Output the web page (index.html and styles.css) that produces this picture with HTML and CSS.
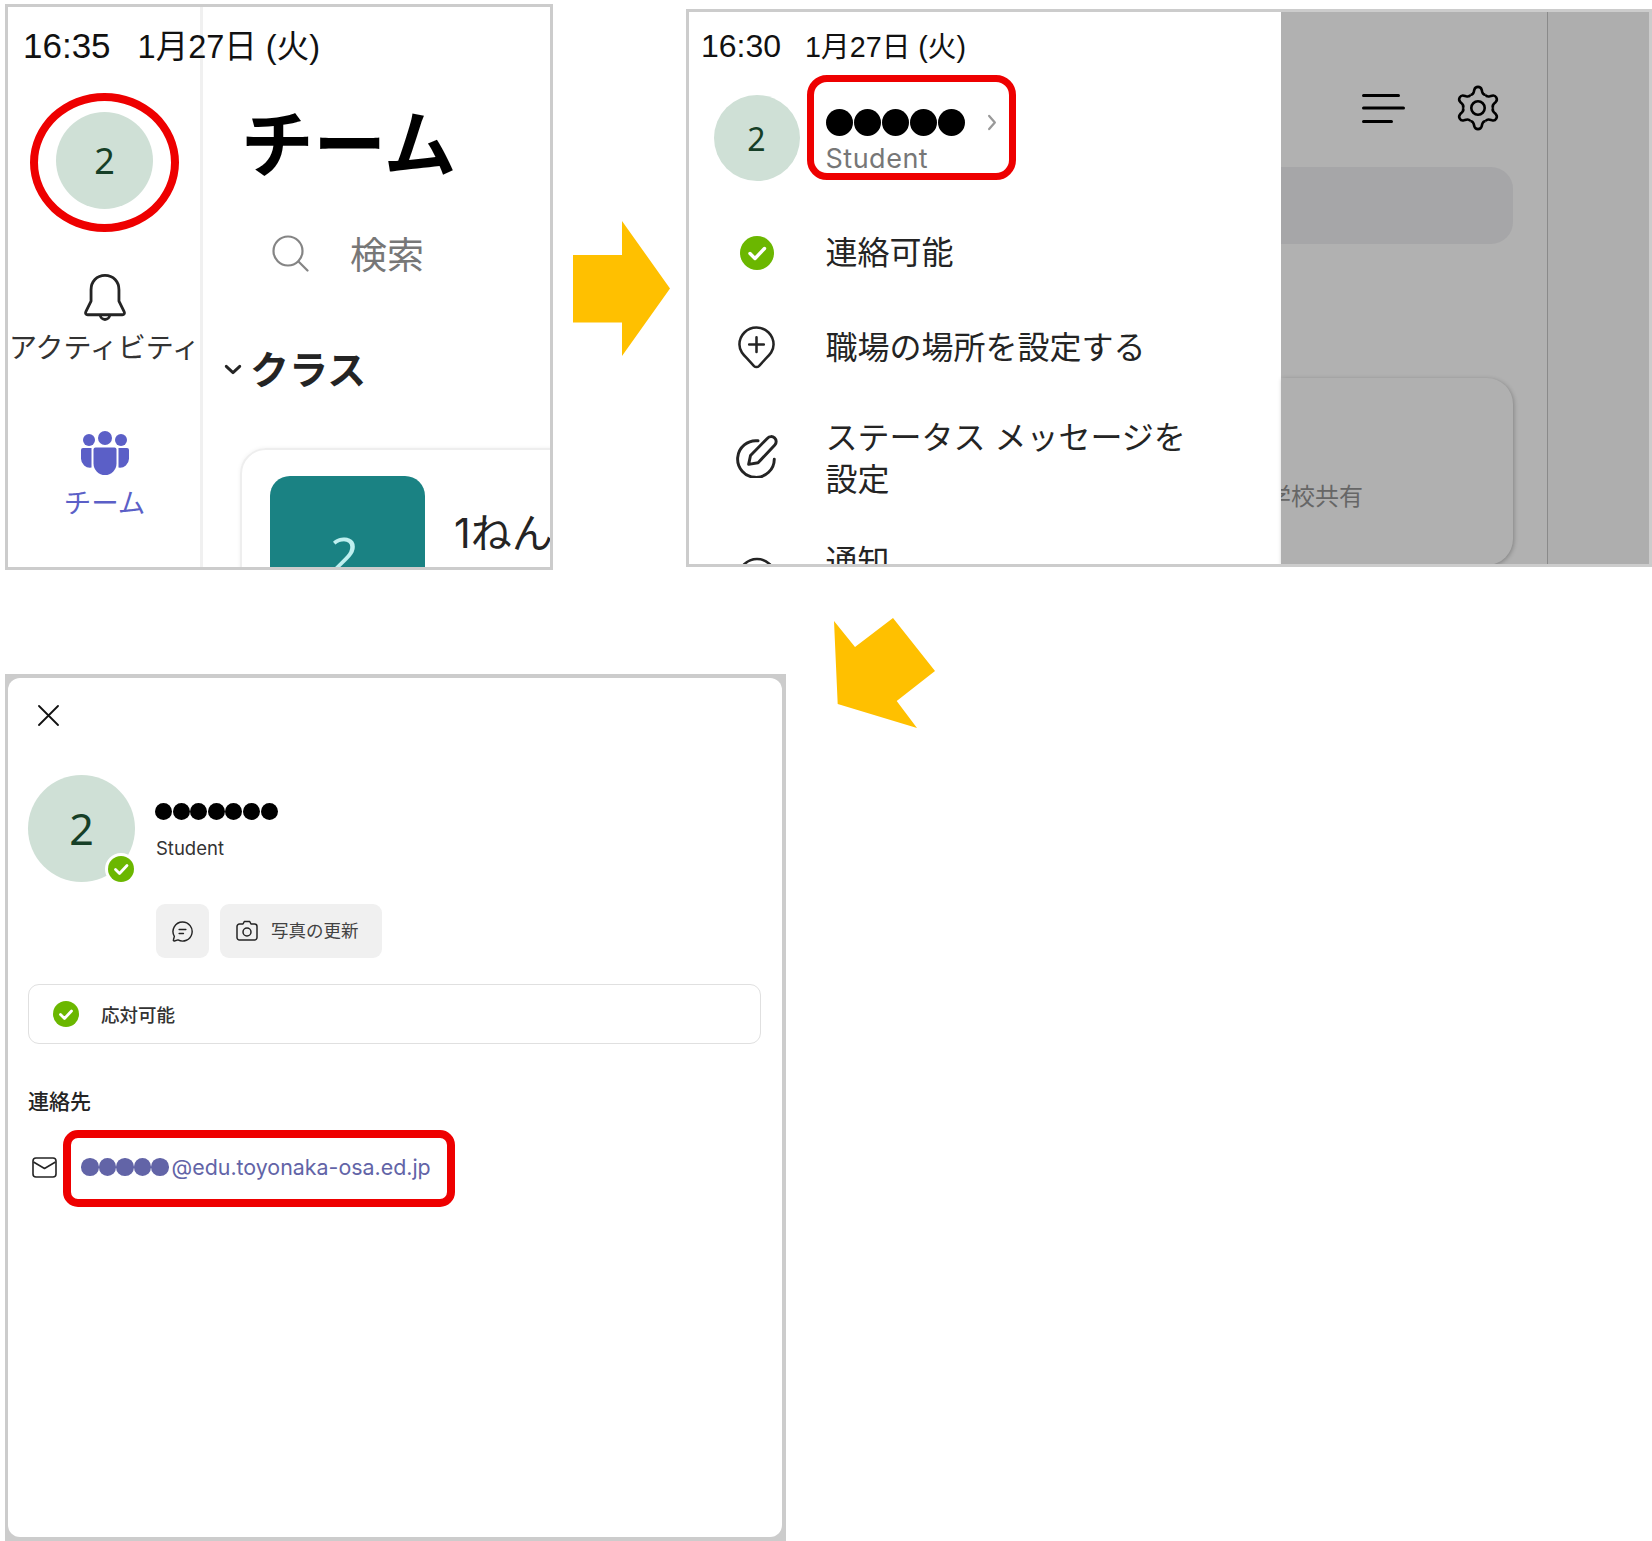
FILE: index.html
```html
<!DOCTYPE html>
<html lang="ja">
<head>
<meta charset="utf-8">
<title>プロフィールの確認</title>
<link rel="stylesheet" href="styles.css">
</head>
<body>
<div class="canvas">

  <section class="shot shot-teams">
    <div class="clock clock-lg"><span>16:35</span><span class="clock-date">1月27日 (火)</span></div>
    <nav class="rail">
      <div class="avatar avatar-lg">2</div>
      <svg class="bell" viewBox="0 0 24 24" fill="none" stroke="#242424" stroke-width="1.25" stroke-linejoin="round"><path d="M12 1.5c-3.7 0-6.2 2.8-6.2 6.4v5L3.5 17.6c-.4.8 0 1.4.8 1.4h15.4c.8 0 1.2-.6.8-1.4l-2.3-4.7v-5c0-3.6-2.5-6.4-6.2-6.4z"/><path d="M9.9 19a2.1 2.1 0 0 0 4.2 0"/></svg>
      <div class="rail-label">アクティビティ</div>
      <svg class="team-icon" viewBox="0 0 48 44" fill="#5B5FC7"><circle cx="8" cy="9" r="6"/><circle cx="24" cy="7" r="7"/><circle cx="40" cy="9" r="6"/><path d="M14.5 16.500h19a2 2 0 0 1 2 2V32.500a11.500 11.500 0 0 1-23 0V18.500a2 2 0 0 1 2-2z"/><path d="M10.500 17H2a2 2 0 0 0-2 2v8.500a9 9 0 0 0 10.500 9z"/><path d="M37.500 17H46a2 2 0 0 1 2 2v8.500a9 9 0 0 1-10.500 9z"/></svg>
      <div class="rail-label rail-label-active">チーム</div>
    </nav>
    <main class="teams-main">
      <h1 class="teams-title">チーム</h1>
      <div class="teams-search">
        <svg class="search-icon" viewBox="0 0 37 37" fill="none" stroke="#858585" stroke-width="2.200"><circle cx="16" cy="16" r="14.500"/><path d="M26.500 26.500l9 9" stroke-linecap="round"/></svg>
        <span>検索</span>
      </div>
      <div class="teams-section">
        <svg class="section-chevron" viewBox="0 0 20 12" fill="none" stroke="#242424" stroke-width="3.200" stroke-linecap="round" stroke-linejoin="round"><path d="M2.500 2.500l7.500 7 7.500-7"/></svg>
        <span>クラス</span>
      </div>
      <article class="team-card">
        <div class="team-tile">2</div>
        <div class="team-name">1ねん</div>
      </article>
    </main>
  </section>

  <section class="shot shot-drawer">
    <aside class="drawer">
      <div class="clock clock-md"><span>16:30</span><span class="clock-date">1月27日 (火)</span></div>
      <div class="drawer-user">
        <div class="avatar avatar-md">2</div>
        <div class="drawer-user-text">
          <div class="dots dots-lg"><i></i><i></i><i></i><i></i><i></i>
            <svg class="user-chevron" viewBox="0 0 10 18" fill="none" stroke="#999" stroke-width="2.400" stroke-linecap="round" stroke-linejoin="round"><path d="M2 2l6 7-6 7"/></svg>
          </div>
          <div class="drawer-role">Student</div>
        </div>
      </div>
      <ul class="menu">
        <li class="menu-item menu-available">
          <svg class="menu-icon icon-check" viewBox="0 0 34 34"><circle cx="17" cy="17" r="17" fill="#6BB700"/><path d="M10 17.500l5 5 9.500-10" fill="none" stroke="#fff" stroke-width="3.400" stroke-linecap="round" stroke-linejoin="round"/></svg>
          <span>連絡可能</span>
        </li>
        <li class="menu-item menu-location">
          <svg class="menu-icon icon-pin" viewBox="0 0 40 46" fill="none" stroke="#242424" stroke-width="2.600" stroke-linejoin="round" stroke-linecap="round"><path d="M20 2.500A17.500 17.500 0 0 1 37.500 20c0 6.500-4 10.500-8 14.500l-7 7.500a3.500 3.500 0 0 1-5 0l-7-7.500c-4-4-8-8-8-14.500A17.500 17.500 0 0 1 20 2.500z"/><path d="M20 12.500v15M12.500 20h15"/></svg>
          <span>職場の場所を設定する</span>
        </li>
        <li class="menu-item menu-status">
          <svg class="menu-icon icon-status" viewBox="0 0 42 42" fill="none" stroke="#242424" stroke-width="2.800" stroke-linejoin="round" stroke-linecap="round"><path d="M22 6.500A17.500 17.500 0 1 0 37.500 24"/><path d="M13 29l1.800-8.500L31 4a4.600 4.600 0 0 1 7 6.500L22 27.500z"/></svg>
          <span>ステータス メッセージを<br>設定</span>
        </li>
        <li class="menu-item menu-notify">
          <svg class="menu-icon icon-notify" viewBox="0 0 40 40" fill="none" stroke="#242424" stroke-width="2.600"><circle cx="20" cy="20" r="18"/></svg>
          <span>通知</span>
        </li>
      </ul>
    </aside>
    <div class="scrim">
      <div class="scrim-page">
        <div class="scrim-head">
          <svg class="menu-lines" viewBox="0 0 43 29" fill="none" stroke="#000" stroke-width="3" stroke-linecap="round"><path d="M1.500 1.500h35M1.500 14h40M1.500 27.500h28"/></svg>
          <svg class="gear" viewBox="0 0 24 24" fill="none" stroke="#000" stroke-width="1.350" stroke-linejoin="round"><g><path d="M8 5.070Q9.300 5.300 9.800 3.600L10.100 2.400Q10.500 1 12 1Q13.500 1 13.900 2.400L14.200 3.600Q14.700 5.300 16 5.070"/><path transform="rotate(60 12 12)" d="M8 5.070Q9.300 5.300 9.800 3.600L10.100 2.400Q10.500 1 12 1Q13.500 1 13.900 2.400L14.200 3.600Q14.700 5.300 16 5.070"/><path transform="rotate(120 12 12)" d="M8 5.070Q9.300 5.300 9.800 3.600L10.100 2.400Q10.500 1 12 1Q13.500 1 13.900 2.400L14.200 3.600Q14.700 5.300 16 5.070"/><path transform="rotate(180 12 12)" d="M8 5.070Q9.300 5.300 9.800 3.600L10.100 2.400Q10.500 1 12 1Q13.500 1 13.900 2.400L14.200 3.600Q14.700 5.300 16 5.070"/><path transform="rotate(240 12 12)" d="M8 5.070Q9.300 5.300 9.800 3.600L10.100 2.400Q10.500 1 12 1Q13.500 1 13.900 2.400L14.200 3.600Q14.700 5.300 16 5.070"/><path transform="rotate(300 12 12)" d="M8 5.070Q9.300 5.300 9.800 3.600L10.100 2.400Q10.500 1 12 1Q13.500 1 13.900 2.400L14.200 3.600Q14.700 5.300 16 5.070"/></g><circle cx="12" cy="12" r="3.500"/></svg>
        </div>
        <div class="scrim-search"></div>
        <div class="scrim-card"><span>学校共有</span></div>
      </div>
      <div class="scrim-side"></div>
    </div>
  </section>

  <section class="shot-profile">
    <div class="profile">
      <svg class="close-icon" viewBox="0 0 21 21" fill="none" stroke="#111" stroke-width="1.800" stroke-linecap="round"><path d="M1 1l19 19M20 1L1 20"/></svg>
      <div class="profile-head">
        <div class="avatar avatar-xl">2
          <svg class="avatar-badge" viewBox="0 0 32 32"><circle cx="16" cy="16" r="16" fill="#fff"/><circle cx="16" cy="16" r="13" fill="#6BB700"/><path d="M10.500 16.500l4 4 7.500-8" fill="none" stroke="#fff" stroke-width="2.800" stroke-linecap="round" stroke-linejoin="round"/></svg>
        </div>
        <div class="profile-info">
          <div class="dots dots-sm"><i></i><i></i><i></i><i></i><i></i><i></i><i></i></div>
          <div class="profile-role">Student</div>
          <div class="profile-actions">
            <div class="action action-square">
              <svg class="action-icon" viewBox="0 0 24 24" fill="none" stroke="#242424" stroke-width="1.500" stroke-linecap="round" stroke-linejoin="round"><path d="M12 2a10 10 0 1 1-4.700 18.800L3.500 21.900a.8.8 0 0 1-1-1l1-3.800A10 10 0 0 1 12 2z"/><path d="M8.500 10h7M8.500 14h4.500"/></svg>
            </div>
            <div class="action">
              <svg class="action-icon action-icon-camera" viewBox="0 0 24 24" fill="none" stroke="#242424" stroke-width="1.500" stroke-linejoin="round"><path d="M8 5l1.300-2.500h5.400L16 5h3.500A2.500 2.500 0 0 1 22 7.500v11a2.500 2.500 0 0 1-2.500 2.500h-15A2.500 2.500 0 0 1 2 18.500v-11A2.500 2.500 0 0 1 4.500 5z"/><circle cx="12" cy="13" r="4"/></svg>
              <span class="action-text">写真の更新</span>
            </div>
          </div>
        </div>
      </div>
      <div class="presence">
        <svg class="presence-icon" viewBox="0 0 26 26"><circle cx="13" cy="13" r="13" fill="#6BB700"/><path d="M7.500 13.500l4 4 7-7.500" fill="none" stroke="#fff" stroke-width="2.800" stroke-linecap="round" stroke-linejoin="round"/></svg>
        <span>応対可能</span>
      </div>
      <h2 class="contact-title">連絡先</h2>
      <div class="contact-row">
        <svg class="mail-icon" viewBox="0 0 25 21" fill="none" stroke="#242424" stroke-width="1.600" stroke-linejoin="round"><rect x="1" y="1" width="23" height="19" rx="3"/><path d="M1.500 5l11 6.500 11-6.500"/></svg>
        <div class="dots dots-mail"><i></i><i></i><i></i><i></i><i></i></div>
        <span class="contact-mail">@edu.toyonaka-osa.ed.jp</span>
      </div>
    </div>
  </section>

  <div class="mark mark-ring"></div>
  <div class="mark mark-user"></div>
  <div class="mark mark-mail"></div>

  <svg class="arrow arrow-right" viewBox="0 0 97 135"><path d="M0 34h49V0l48 67.500-48 67.500v-33.500H0z" fill="#FFC000"/></svg>
  <svg class="arrow arrow-down" viewBox="0 0 102 111"><path d="M1 4l21 26L60 1l42 53-38.300 30L84 111 4.700 87z" fill="#FFC000"/></svg>
</div>
</body>
</html>
```
FILE: styles.css
```css
* { box-sizing: border-box; }
html, body { margin: 0; padding: 0; background: #fff; }
body { font-family: Inter, "Noto Sans CJK JP", sans-serif; color: #242424; }
h1, h2, ul { margin: 0; padding: 0; }
ul { list-style: none; }
svg { display: block; flex: none; }

.canvas { position: relative; width: 1652px; height: 1541px; overflow: hidden; }
.shot { position: absolute; border: 3px solid #ccc; background: #fff; overflow: hidden; display: flex; }

/* shared */
.clock { display: flex; align-items: baseline; color: #111; white-space: nowrap; font-family: "Liberation Sans", "Noto Sans CJK JP", sans-serif; }
.clock-lg { position: absolute; left: 15px; top: 19px; gap: 27px; font-size: 35px; line-height: 40px; }
.clock-lg .clock-date { font-size: 32.500px; }
.clock-md { gap: 24px; font-size: 32px; height: 36px; line-height: 36px; }
.clock-md .clock-date { font-size: 28.700px; }
.avatar {
  position: relative; flex: none; display: flex; align-items: center; justify-content: center;
  border-radius: 50%; background: #CFE0D6; color: #163F27; font-family: "Noto Sans", sans-serif;
}
.avatar-lg { width: 97px; height: 97px; font-size: 36px; }
.avatar-md { width: 86px; height: 86px; font-size: 32px; }
.avatar-xl { width: 107px; height: 107px; font-size: 43px; }
.dots { display: flex; }
.dots i { display: block; flex: none; border-radius: 50%; background: #000; }

/* first screenshot */
.shot-teams { left: 5px; top: 4px; width: 548px; height: 566px; }
.rail {
  width: 195px; flex: none; display: flex; flex-direction: column; align-items: center;
  padding: 105px 0 0 1px; border-right: 3px solid #f0f0f0;
}
.bell { width: 54px; height: 54px; margin-top: 63px; }
.rail-label { margin-top: 7px; font-size: 28px; line-height: 30px; white-space: nowrap; color: #333; }
.team-icon { width: 48px; height: 44px; margin-top: 68px; }
.rail-label-active { margin-top: 13px; font-size: 27.500px; color: #5B5FC7; }
.teams-main { flex: 1; min-width: 0; padding-top: 98px; }
.teams-title { padding-left: 38px; font-size: 72.500px; line-height: 80px; font-weight: 700; color: #000; white-space: nowrap; }
.teams-search { display: flex; align-items: center; gap: 41px; margin-top: 48px; padding-left: 69px; height: 40px; font-size: 37px; color: #777; }
.search-icon { width: 37px; height: 37px; }
.teams-section { display: flex; align-items: center; gap: 8px; margin-top: 72px; padding-left: 21px; height: 44px; font-size: 39px; font-weight: 700; color: #242424; }
.section-chevron { width: 18px; height: 11px; margin-top: 5px; }
.team-card {
  display: flex; gap: 29px; margin: 59px 0 0 37px; padding: 26px 28px; width: 400px; height: 220px;
  border: 2px solid #eee; border-radius: 26px 0 0 0; box-shadow: 0 0 4px rgba(0,0,0,.06);
}
.team-tile {
  width: 155px; height: 155px; flex: none; display: flex; align-items: center; justify-content: center;
  padding-right: 6px; border-radius: 20px; background: #1A8283; color: #BFEFEF; font-size: 50px; font-family: "Noto Sans", sans-serif;
}
.team-name { margin-top: 32px; font-size: 41px; line-height: 50px; color: #242424; white-space: nowrap; }

/* second screenshot */
.shot-drawer { left: 686px; top: 9px; width: 966px; height: 558px; }
.drawer { width: 592px; flex: none; padding: 16px 0 0 12px; background: #fff; }
.drawer-user { display: flex; gap: 26px; margin: 31px 0 0 12.500px; }
.drawer-user-text { padding-top: 14px; }
.dots-lg i { width: 27px; height: 27px; margin-right: 1px; }
.dots-lg { align-items: center; }
.user-chevron { width: 10px; height: 17px; margin-left: 21px; }
.drawer-role { margin-top: 7px; font-size: 27px; line-height: 32px; color: #777; letter-spacing: .5px; }
.menu { margin: 51px 0 0 12.500px; }
.menu-item {
  display: grid; grid-template-columns: 86px 1fr; column-gap: 26px; align-items: center;
  font-size: 32px; line-height: 42px; white-space: nowrap; color: #242424;
}
.menu-icon { justify-self: center; }
.icon-check { width: 34px; height: 34px; }
.icon-pin { width: 39px; height: 45px; }
.icon-status { width: 44px; height: 44px; margin-top: -6px; }
.icon-notify { width: 40px; height: 40px; margin-top: 16px; }
.menu-location { margin-top: 51px; }
.menu-status { margin-top: 47px; }
.menu-notify { margin-top: 40px; align-items: start; }

.scrim { flex: 1; min-width: 0; display: flex; background: #B1B1B1; }
.scrim-page { flex: 1; min-width: 0; padding-top: 75px; border-right: 1px solid #8A8A8A; }
.scrim-side { width: 101px; flex: none; background: #AEAEAE; }
.scrim-head { display: flex; justify-content: flex-end; align-items: center; gap: 50px; padding-right: 46px; height: 42px; }
.menu-lines { width: 43px; height: 29px; }
.gear { width: 46px; height: 46px; }
.scrim-search { height: 77px; margin: 38px 34px 0 0; border-radius: 0 22px 22px 0; background: #A6A6A8; }
.scrim-card {
  display: flex; justify-content: flex-end; height: 187px; margin: 134px 34px 0 0; padding: 104px 150px 0 0;
  overflow: hidden; border-radius: 0 26px 26px 0; background: #B0B0B0;
  box-shadow: 1px 1px 4px rgba(0,0,0,.25);
  font-size: 24px; line-height: 30px; color: #666; white-space: nowrap;
}

/* third screenshot */
.shot-profile { position: absolute; left: 5px; top: 674px; width: 781px; height: 867px; padding: 4px 4px 4px 3px; background: #ccc; }
.profile { height: 100%; padding: 27px 21px 0 20px; border-radius: 12px; background: #fff; }
.close-icon { width: 21px; height: 21px; margin-left: 10px; }
.profile-head { display: flex; gap: 21px; margin-top: 49px; }
.avatar-badge { position: absolute; right: -2px; bottom: -3px; width: 32px; height: 32px; }
.profile-info { padding-top: 28px; }
.dots-sm { margin-left: -1px; }
.dots-sm i { width: 17px; height: 17px; margin-right: .600px; }
.profile-role { margin-top: 16px; font-size: 18.500px; line-height: 24px; color: #333; }
.profile-actions { display: flex; gap: 11px; margin-top: 44px; }
.action { display: flex; align-items: center; gap: 12px; height: 54px; padding: 0 23px 0 15px; border-radius: 9px; background: #F0F0F0; font-size: 17.500px; color: #424242; white-space: nowrap; }
.action-square { width: 53px; padding: 0; justify-content: center; }
.action-icon { width: 23px; height: 23px; }
.action-icon-camera { width: 24px; height: 24px; }
.action-text { padding-bottom: 4px; }
.presence { display: flex; align-items: center; gap: 22px; height: 60px; margin-top: 26px; padding-left: 24px; border: 1.500px solid #E0E0E0; border-radius: 11px; font-size: 18.500px; font-weight: 500; color: #333; }
.presence-icon { width: 26px; height: 26px; }
.contact-title { margin-top: 44px; font-size: 21px; line-height: 28px; font-weight: 500; color: #242424; }
.contact-row { display: flex; align-items: center; height: 26px; margin: 38px 0 0 4px; }
.mail-icon { width: 25px; height: 21px; }
.dots-mail { margin: 0 3px 0 24px; }
.dots-mail i { width: 17.500px; height: 17.500px; background: #6264A7; }
.contact-mail { font-size: 21.400px; color: #6264A7; white-space: nowrap; }

/* annotations laid over the screenshots */
.mark { position: absolute; border-style: solid; border-color: #EE0000; }
.mark-ring { left: 30px; top: 93px; width: 149px; height: 139px; border-width: 8px; border-radius: 50%; }
.mark-user { left: 807px; top: 75px; width: 209px; height: 105px; border-width: 7px; border-radius: 20px; }
.mark-mail { left: 63px; top: 1130px; width: 392px; height: 77px; border-width: 8px; border-radius: 15px; }
.arrow { position: absolute; }
.arrow-right { left: 573px; top: 221px; width: 97px; height: 135px; }
.arrow-down { left: 833px; top: 617px; width: 102px; height: 111px; }
```
